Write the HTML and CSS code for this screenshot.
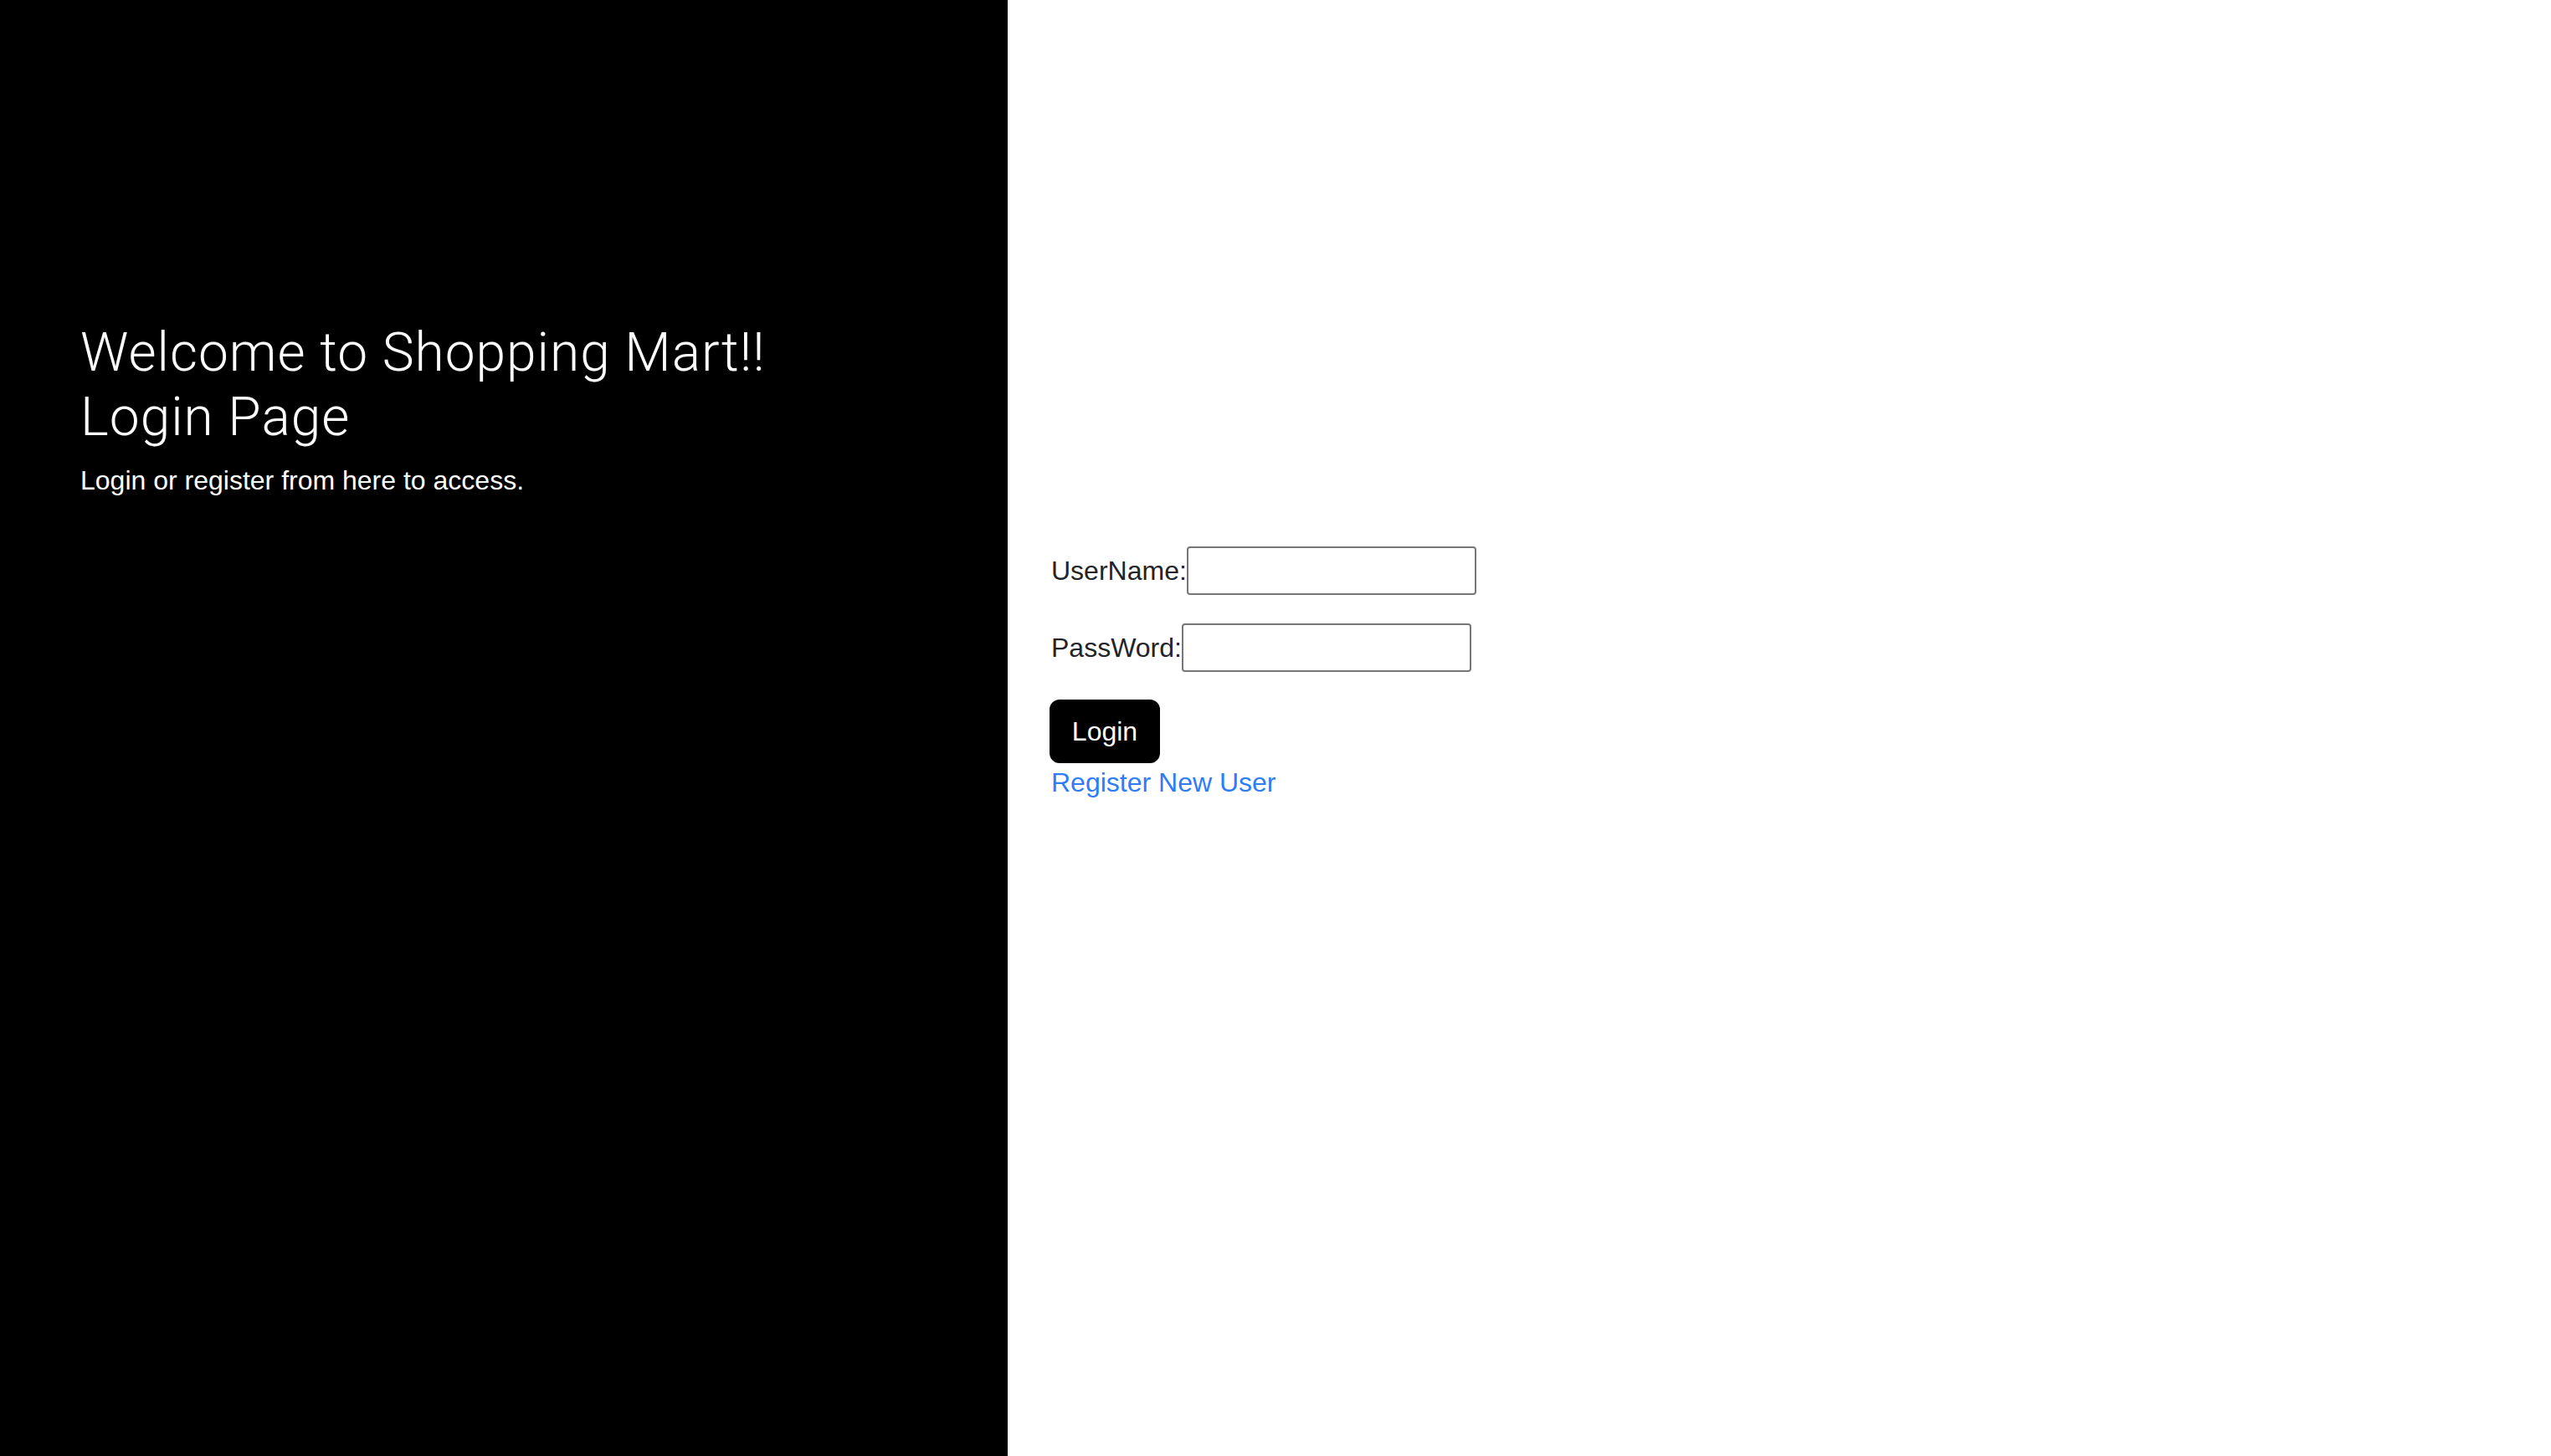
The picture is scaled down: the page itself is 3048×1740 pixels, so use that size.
FILE: index.html
```html
<!DOCTYPE html>
<html lang="en">
<head>
<meta charset="utf-8">
<title>Login - Shopping Mart</title>
<link rel="stylesheet" href="styles.css">
</head>
<body>
<div class="page">
  <section class="intro">
    <h2 class="intro-title">Welcome to Shopping Mart!!<br>Login Page</h2>
    <p class="intro-text">Login or register from here to access.</p>
  </section>
  <section class="auth">
    <form class="login-form">
      <div class="field">
        <label class="field-label" for="username">UserName:</label>
        <input class="field-input" id="username" type="text">
      </div>
      <div class="field">
        <label class="field-label" for="password">PassWord:</label>
        <input class="field-input" id="password" type="password">
      </div>
      <button class="btn-login" type="button">Login</button>
      <a class="register-link" href="#">Register New User</a>
    </form>
  </section>
</div>
</body>
</html>
```

FILE: styles.css
```css
html, body {
  margin: 0;
  padding: 0;
  height: 100%;
}
body {
  font-family: "Liberation Sans", Arial, Helvetica, sans-serif;
  color: #212529;
  background: #fff;
}
.page {
  display: flex;
  height: 1740px;
}
.intro {
  width: 1204px;
  flex: 0 0 1204px;
  background: #000;
  color: #fff;
  box-sizing: border-box;
  padding: 384px 40px 0 96px;
}
.intro-title {
  margin: 0 0 14px;
  font-family: "Roboto", "Liberation Sans", sans-serif;
  font-weight: 300;
  font-size: 64px;
  line-height: 76.8px;
  letter-spacing: 1px;
}
.intro-text {
  margin: 0;
  font-size: 32px;
  line-height: 44px;
}
.auth {
  flex: 1;
  box-sizing: border-box;
  padding: 653px 0 0 50px;
}
.login-form {
  display: flex;
  flex-direction: column;
  align-items: flex-start;
}
.field {
  display: flex;
  align-items: center;
  height: 58px;
  margin-bottom: 34px;
  padding-left: 2px;
}
.field + .btn-login {
  margin-top: -1px;
}
.field-label {
  font-size: 32px;
  line-height: 48px;
}
.field-input {
  box-sizing: border-box;
  width: 346px;
  height: 58px;
  border: 2px solid #767676;
  border-radius: 4px;
  margin: 0;
  padding: 2px 4px;
  font-size: 26px;
  background: #fff;
}
.btn-login {
  box-sizing: border-box;
  height: 76px;
  width: 132px;
  padding: 12px 24px;
  border: 2px solid #000;
  border-radius: 12px;
  background: #000;
  color: #fff;
  font-family: "Liberation Sans", Arial, sans-serif;
  font-size: 32px;
  line-height: 48px;
  cursor: pointer;
}
.register-link {
  display: block;
  font-size: 32px;
  line-height: 46px;
  color: #2e7cf6;
  text-decoration: none;
  padding-left: 2px;
}
```
